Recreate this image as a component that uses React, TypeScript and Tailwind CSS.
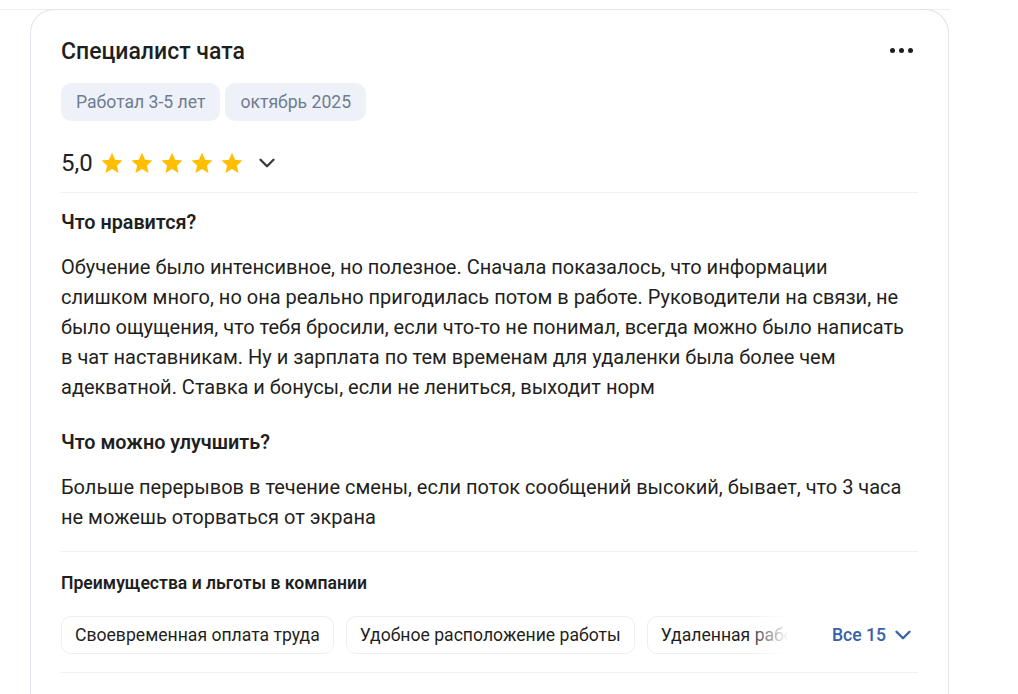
import { ChevronDown } from "lucide-react"

const likes =
  "Обучение было интенсивное, но полезное. Сначала показалось, что информации слишком много, но она реально пригодилась потом в работе. Руководители на связи, не было ощущения, что тебя бросили, если что-то не понимал, всегда можно было написать в чат наставникам. Ну и зарплата по тем временам для удаленки была более чем адекватной. Ставка и бонусы, если не лениться, выходит норм"

const improve =
  "Больше перерывов в течение смены, если поток сообщений высокий, бывает, что 3 часа не можешь оторваться от экрана"

const perks = ["Своевременная оплата труда", "Удобное расположение работы", "Удаленная работа"]

function Star() {
  return (
    <svg width="24" height="24" viewBox="0 0 24 24">
      <path
        d="M12 1.8l3.1 6.9 7.4.8-5.6 5 1.6 7.4L12 18.1l-6.5 3.8 1.6-7.4-5.6-5 7.4-.8z"
        fill="#ffbf00"
      />
    </svg>
  )
}

export default function App() {
  return (
    <main className="min-h-screen w-full bg-white font-['Roboto',sans-serif] text-[#1f1f22] overflow-hidden">
      <div className="h-[10px] w-[950px] border-b border-[#eceef3]" />

      <div className="ml-[30px] -mt-px w-[919px] h-[700px] rounded-t-[24px] border border-b-0 border-[#dfe3eb] pl-[30px] pr-[30px] pt-[28px]">
        {/* заголовок */}
        <div className="flex items-center justify-between h-[28px]">
          <h2 className="text-[23px] font-medium leading-[28px]">Специалист чата</h2>
          <div className="flex gap-[4px] mr-[5px] -mt-[4px]">
            <span className="w-[5px] h-[5px] rounded-full bg-[#1f1f22]" />
            <span className="w-[5px] h-[5px] rounded-full bg-[#1f1f22]" />
            <span className="w-[5px] h-[5px] rounded-full bg-[#1f1f22]" />
          </div>
        </div>

        <div className="flex gap-[5px] mt-[17px]">
          <span className="h-[38px] px-[15px] flex items-center rounded-[10px] bg-[#eef1f7] text-[17.6px] text-[#6e7c93]">
            Работал 3-5 лет
          </span>
          <span className="h-[38px] px-[15px] flex items-center rounded-[10px] bg-[#eef1f7] text-[17.6px] text-[#6e7c93]">
            октябрь 2025
          </span>
        </div>

        {/* рейтинг */}
        <div className="flex items-center mt-[28px] h-[28px]">
          <span className="text-[24px] leading-[28px] mr-[7px]">5,0</span>
          <div className="flex gap-[6px]">
            <Star />
            <Star />
            <Star />
            <Star />
            <Star />
          </div>
          <ChevronDown className="ml-[10px] w-[26px] h-[26px] text-[#3b3b40]" strokeWidth={2.2} />
        </div>

        <div className="mt-[15px] h-px bg-[#eff1f5]" />

        <h3 className="mt-[18px] text-[19.8px] font-semibold leading-[24px]">Что нравится?</h3>
        <p className="mt-[17px] max-w-[855px] text-[20px] leading-[30px]">{likes}</p>

        <h3 className="mt-[29px] text-[19.8px] font-semibold leading-[24px]">Что можно улучшить?</h3>
        <p className="mt-[17px] max-w-[855px] text-[20px] leading-[30px]">{improve}</p>

        <div className="mt-[19px] h-px bg-[#eff1f5]" />

        <h4 className="mt-[21px] text-[17.6px] font-semibold leading-[20px]">Преимущества и льготы в компании</h4>

        <div className="mt-[23px] flex items-center">
          <div className="relative w-[727px] overflow-hidden">
            <div className="flex gap-[12px]">
              {perks.map((p) => (
                <span
                  key={p}
                  className="shrink-0 h-[38px] px-[13px] flex items-center rounded-[10px] border border-[#eceef3] text-[17.6px] whitespace-nowrap"
                >
                  {p}
                </span>
              ))}
            </div>
            <div className="absolute right-0 top-0 h-full w-[40px] bg-gradient-to-r from-white/0 to-white" />
          </div>
          <button className="ml-auto mr-[2px] flex items-center gap-[4px] text-[17.6px] font-medium text-[#3a60a8]">
            Все 15
            <ChevronDown className="w-[26px] h-[26px]" strokeWidth={2.2} />
          </button>
        </div>

        <div className="mt-[18px] h-px bg-[#eff1f5]" />
      </div>
    </main>
  )
}
